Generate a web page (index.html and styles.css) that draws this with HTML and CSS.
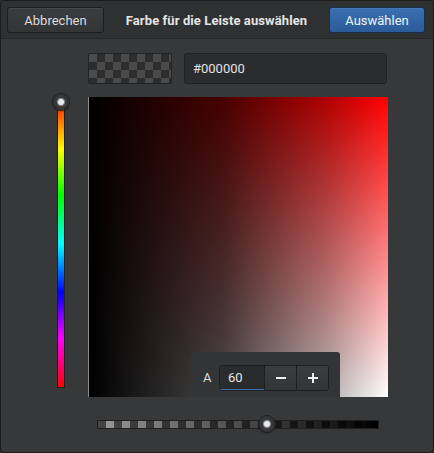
FILE: index.html
```html
<!DOCTYPE html>
<html lang="de">
<head>
<meta charset="utf-8">
<link rel="stylesheet" href="styles.css">
</head>
<body>
<div class="dialog">
  <div class="header">
    <button class="btn">Abbrechen</button>
    <div class="title">Farbe für die Leiste auswählen</div>
    <button class="btn btn-primary">Auswählen</button>
  </div>
  <div class="body">
    <div class="top-row">
      <div class="swatch"></div>
      <div class="hex-input">#000000</div>
    </div>
    <div class="picker-row">
      <div class="hue-col">
        <div class="hue-bar">
          <div class="thumb hue-thumb"></div>
        </div>
      </div>
      <div class="sv-square">
        <div class="alpha-pop">
          <span class="alpha-label">A</span>
          <div class="alpha-field">
            <div class="alpha-input">60</div>
            <button class="step">
              <svg width="12" height="12" viewBox="0 0 12 12"><path d="M1 6h10" stroke="#f0f0f0" stroke-width="2"/></svg>
            </button>
            <button class="step">
              <svg width="12" height="12" viewBox="0 0 12 12"><path d="M1 6h10M6 1v10" stroke="#f0f0f0" stroke-width="2"/></svg>
            </button>
          </div>
        </div>
      </div>
    </div>
    <div class="alpha-row">
      <div class="alpha-bar">
        <div class="thumb alpha-thumb"></div>
      </div>
    </div>
  </div>
</div>
</body>
</html>
```

FILE: styles.css
```css
* { box-sizing: border-box; }
html, body { margin: 0; padding: 0; background: #2b2c2e; }
body { font-family: Roboto, "Liberation Sans", sans-serif; font-size: 13px; color: #dedede; }

.dialog {
  width: 434px;
  height: 453px;
  border: 1px solid #1c1c1d;
  border-radius: 5px;
  background: #37383a;
  overflow: hidden;
}

.header {
  height: 38px;
  display: flex;
  align-items: center;
  justify-content: space-between;
  padding: 0 8px 0 6px;
  background: #2f3032;
  border-bottom: 1px solid #262729;
}

.btn {
  height: 26px;
  width: 97px;
  margin-top: 1px;
  border: 1px solid #1d1d1e;
  border-radius: 3px;
  background: linear-gradient(#3b3c3e, #333436);
  color: #dcdcdc;
  font-family: Roboto, "Liberation Sans", sans-serif;
  font-size: 13px;
  padding: 0;
  box-shadow: inset 0 1px 0 rgba(255,255,255,0.06);
}
.btn-primary {
  width: 96px;
  background: linear-gradient(#3a70b3, #2c5a98);
  border-color: #1d2e48;
  color: #f0f4fa;
}

.title {
  font-weight: bold;
  font-size: 13px;
  letter-spacing: 0.1px;
  color: #e4e4e4;
  margin-top: 1px;
}

.body { padding-top: 14px; }

.top-row {
  display: flex;
  gap: 12px;
  padding-left: 87px;
}
.swatch {
  width: 84px;
  height: 31px;
  border: 1px solid #222324;
  border-radius: 2px;
  background: repeating-conic-gradient(#2c2c2d 0 25%, #4a4a4b 0 50%) 0 0 / 16px 16px;
}
.hex-input {
  width: 203px;
  height: 31px;
  border: 1px solid #202122;
  border-radius: 3px;
  background: #2b2c2e;
  padding: 0 8px;
  line-height: 29px;
  color: #e2e2e2;
  font-size: 13px;
}

.picker-row {
  display: flex;
  margin-top: 13px;
}
.hue-col {
  width: 87px;
  padding-top: 3px;
  display: flex;
  justify-content: flex-start;
  padding-left: 56px;
}
.hue-bar {
  position: relative;
  width: 8px;
  height: 288px;
  border: 1px solid #1f1f20;
  background: linear-gradient(to bottom, #ff1a00 0%, #ffff00 17%, #00ff00 33%, #00ffff 50%, #0000ff 67%, #ff00ff 83%, #ff0000 100%);
}
.thumb {
  position: absolute;
  width: 16px;
  height: 16px;
  border-radius: 50%;
  background: radial-gradient(circle, #e8e8e8 0 2.5px, #8a8a8a 3.5px, #3b3c3e 4.5px, #2f3032 8px);
  box-shadow: 0 0 0 1px #1e1e1f, 0 1px 2px rgba(0,0,0,0.5);
}
.hue-thumb { left: -5px; top: -7px; }

.sv-square {
  position: relative;
  width: 300px;
  height: 300px;
  border-left: 1px solid #8a8a8a;
  background:
    linear-gradient(to right, #000 0%, rgba(0,0,0,0.72) 45%, rgba(0,0,0,0.3) 80%, rgba(0,0,0,0) 100%),
    linear-gradient(to bottom, #ff0000 0%, #ffffff 100%);
}

.alpha-pop {
  position: absolute;
  left: 102px;
  bottom: 0;
  width: 149px;
  height: 45px;
  background: #333436;
  border-radius: 3px 3px 0 0;
  display: flex;
  align-items: center;
  padding: 6px 0 0 12px;
  gap: 6px;
}
.alpha-label { color: #d8d8d8; font-size: 13px; width: 10px; }
.alpha-field {
  display: flex;
  height: 26px;
  border: 1px solid #1e1f20;
  border-radius: 3px;
  overflow: hidden;
}
.alpha-input {
  width: 44px;
  background: #2a2b2d;
  line-height: 24px;
  padding-left: 8px;
  color: #e6e6e6;
  font-size: 13px;
  border-bottom: 1px solid #3d6fb0;
}
.step {
  width: 32px;
  height: 24px;
  border: none;
  border-left: 1px solid #1e1f20;
  background: linear-gradient(#3b3c3e, #343537);
  padding: 0;
  display: flex;
  align-items: center;
  justify-content: center;
}

.alpha-row {
  margin-top: 23px;
  padding-left: 96px;
}
.alpha-bar {
  position: relative;
  width: 282px;
  height: 9px;
  border: 1px solid #1f1f20;
  background:
    linear-gradient(to right, rgba(0,0,0,0) 0%, #000 100%),
    repeating-conic-gradient(#9a9a9a 0 25%, #444 0 50%) 0 0 / 16px 16px;
}
.alpha-thumb { left: 161px; top: -5px; }
```
